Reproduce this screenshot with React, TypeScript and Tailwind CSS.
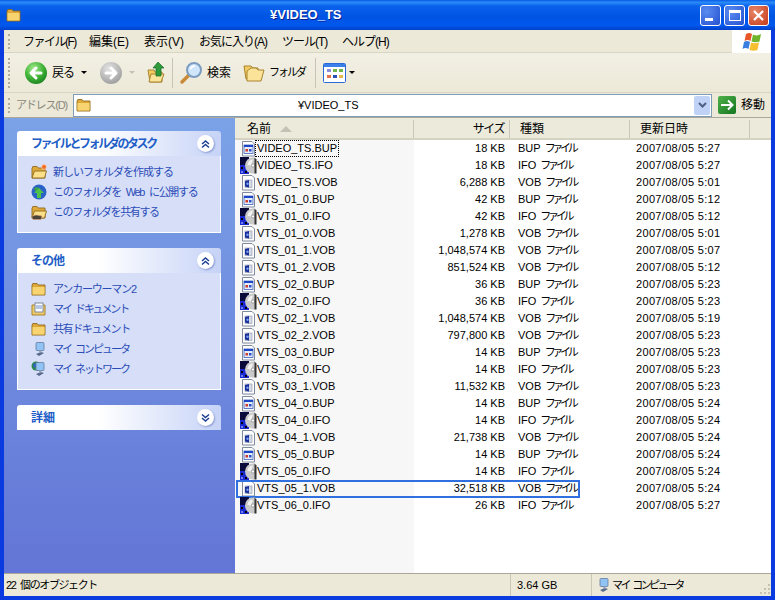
const font = "[font-family:'Liberation_Sans','Noto_Sans_CJK_JP',sans-serif]"

const files = [
  ['VIDEO_TS.BUP', '18 KB', 'BUP', '2007/08/05 5:27'],
  ['VIDEO_TS.IFO', '18 KB', 'IFO', '2007/08/05 5:27'],
  ['VIDEO_TS.VOB', '6,288 KB', 'VOB', '2007/08/05 5:01'],
  ['VTS_01_0.BUP', '42 KB', 'BUP', '2007/08/05 5:12'],
  ['VTS_01_0.IFO', '42 KB', 'IFO', '2007/08/05 5:12'],
  ['VTS_01_0.VOB', '1,278 KB', 'VOB', '2007/08/05 5:01'],
  ['VTS_01_1.VOB', '1,048,574 KB', 'VOB', '2007/08/05 5:07'],
  ['VTS_01_2.VOB', '851,524 KB', 'VOB', '2007/08/05 5:12'],
  ['VTS_02_0.BUP', '36 KB', 'BUP', '2007/08/05 5:23'],
  ['VTS_02_0.IFO', '36 KB', 'IFO', '2007/08/05 5:23'],
  ['VTS_02_1.VOB', '1,048,574 KB', 'VOB', '2007/08/05 5:19'],
  ['VTS_02_2.VOB', '797,800 KB', 'VOB', '2007/08/05 5:23'],
  ['VTS_03_0.BUP', '14 KB', 'BUP', '2007/08/05 5:23'],
  ['VTS_03_0.IFO', '14 KB', 'IFO', '2007/08/05 5:23'],
  ['VTS_03_1.VOB', '11,532 KB', 'VOB', '2007/08/05 5:23'],
  ['VTS_04_0.BUP', '14 KB', 'BUP', '2007/08/05 5:24'],
  ['VTS_04_0.IFO', '14 KB', 'IFO', '2007/08/05 5:24'],
  ['VTS_04_1.VOB', '21,738 KB', 'VOB', '2007/08/05 5:24'],
  ['VTS_05_0.BUP', '14 KB', 'BUP', '2007/08/05 5:24'],
  ['VTS_05_0.IFO', '14 KB', 'IFO', '2007/08/05 5:24'],
  ['VTS_05_1.VOB', '32,518 KB', 'VOB', '2007/08/05 5:24'],
  ['VTS_06_0.IFO', '26 KB', 'IFO', '2007/08/05 5:27'],
]

function Folder({ size = 16, open = false, mark }: { size?: number; open?: boolean; mark?: 'new' | 'share' }) {
  return (
    <svg width={size} height={size} viewBox="0 0 16 16" className="shrink-0">
      <path d="M1 4.5 L1.8 2.5 H6 L7.2 4 H14 V14 H1 Z" fill="#dfa93a" stroke="#8f6a1e" strokeWidth="0.9" />
      {open ? (
        <path d="M3.5 7 H15.5 L13.5 14 H1 Z" fill="#fbe08a" stroke="#8f6a1e" strokeWidth="0.9" />
      ) : (
        <rect x="1.5" y="6" width="12" height="7.5" fill="#f8d470" />
      )}
      {mark === 'new' && <circle cx="13" cy="3" r="2.4" fill="#ef6a2a" stroke="#ffd9a0" strokeWidth="0.7" />}
      {mark === 'share' && <path d="M0.5 12.5 L5 11 L11 12 L10 15.5 H2 Z" fill="#4a4238" stroke="#d8a070" strokeWidth="0.6" />}
    </svg>
  )
}

function FileIcon({ name }: { name: string }) {
  if (name.endsWith('.IFO')) {
    return (
      <svg width="17" height="17" viewBox="0 0 17 17" className="shrink-0">
        <rect x="0" y="0" width="9" height="8" fill="#0a0a3a" />
        <rect x="0" y="8" width="9" height="9" fill="#1a2ad0" />
        <rect x="1" y="10" width="2" height="2" fill="#000" />
        <rect x="5" y="14" width="2" height="2" fill="#000" />
        <rect x="1" y="14" width="2" height="2" fill="#7080f0" />
        <path d="M13 0.5 A8 8 0 0 0 13 16.5 L15 16.5 L15 0.5 Z" fill="#c9c9c9" />
        <path d="M13 2.5 A6 6 0 0 0 7.5 8 L11 8.5 Z" fill="#f2f2f2" />
        <circle cx="13" cy="8.5" r="1.6" fill="#fff" stroke="#777" strokeWidth="0.6" />
        <path d="M14.5 0.5 L16.5 2.5 V16.5 H14.5 Z" fill="#333" />
      </svg>
    )
  }
  return (
    <svg width="17" height="17" viewBox="0 0 17 17" className="shrink-0">
      <path d="M2.5 1.5 H12 L14.5 4 V16 H2.5 Z" fill="#fff" stroke="#7f8a9c" strokeWidth="1" />
      {name.endsWith('.BUP') ? (
        <>
          <rect x="4" y="5" width="9" height="8.5" fill="#e6ecf8" stroke="#3a5fb8" strokeWidth="0.8" />
          <rect x="4" y="5" width="9" height="2" fill="#1c46c8" />
          <rect x="5.5" y="9" width="2.5" height="2.5" fill="#d03a2a" />
          <rect x="9" y="9" width="2.5" height="2.5" fill="#2a50c8" />
        </>
      ) : (
        <>
          <rect x="5" y="6" width="7" height="7.5" fill="#d7dbe6" stroke="#8b93a8" strokeWidth="0.6" />
          <path d="M5 7 L9 6 V13.5 L5 12.5 Z" fill="#18309a" />
          <circle cx="7.5" cy="9.8" r="1.2" fill="#7fa0ef" />
        </>
      )}
    </svg>
  )
}

function NavArrow({ disabled, dir }: { disabled?: boolean; dir: 'left' | 'right' }) {
  const d = dir === 'left' ? 'M17 12 H8 M12 7 L7 12 L12 17' : 'M7 12 H16 M12 7 L17 12 L12 17'
  return (
    <svg width="24" height="24" viewBox="0 0 24 24" className="shrink-0">
      <defs>
        <radialGradient id="navGreen" cx="40%" cy="30%" r="75%">
          <stop offset="0%" stopColor="#a5ec90" />
          <stop offset="55%" stopColor="#44b53a" />
          <stop offset="100%" stopColor="#16801d" />
        </radialGradient>
        <radialGradient id="navGray" cx="40%" cy="30%" r="75%">
          <stop offset="0%" stopColor="#e4e4e4" />
          <stop offset="100%" stopColor="#9c9c9c" />
        </radialGradient>
      </defs>
      <circle cx="12" cy="12" r="11" fill={disabled ? 'url(#navGray)' : 'url(#navGreen)'} />
      <path d={d} fill="none" stroke="#fff" strokeWidth="3" strokeLinecap="round" strokeLinejoin="round" />
    </svg>
  )
}

function Caret({ muted }: { muted?: boolean }) {
  return <span className={`inline-block w-0 h-0 border-x-[3px] border-x-transparent border-t-[3px] ${muted ? 'border-t-[#c4c2b4]' : 'border-t-black'}`} />
}

function Chevron({ up }: { up?: boolean }) {
  const a = up ? 'M4 8 L7.5 5 L11 8 M4 11.5 L7.5 8.5 L11 11.5' : 'M4 4.5 L7.5 7.5 L11 4.5 M4 8 L7.5 11 L11 8'
  return (
    <span className="w-[17px] h-[17px] rounded-full bg-white shadow-[1px_1px_2px_#8a9ad0] flex items-center justify-center">
      <svg width="15" height="15" viewBox="0 0 15 15">
        <path d={a} fill="none" stroke="#1c3f94" strokeWidth="1.5" />
      </svg>
    </span>
  )
}

function Computer({ net }: { net?: boolean }) {
  return (
    <svg width="16" height="16" viewBox="0 0 16 16" className="shrink-0">
      {net && <circle cx="5" cy="5" r="4.5" fill="#2b8a4a" />}
      {net && <path d="M2 3 L6 1.5 L6 5 L3 7 Z" fill="#3060c8" />}
      <rect x="5" y="1.5" width="8" height="8" rx="1" fill="#8fc4f4" stroke="#64789c" strokeWidth="0.8" />
      <path d="M5 13 L10 11 L13 12 L8 15 Z" fill="#58698c" />
      <rect x="8" y="9.5" width="2.5" height="2" fill="#99a4bc" />
    </svg>
  )
}

function SideLink({ icon, label, fit }: { icon: React.ReactNode; label: string; fit: string }) {
  return (
    <div className="h-5 flex items-center gap-[6px] pl-[13px] text-[11px] text-[#2b4bb8] whitespace-nowrap [word-spacing:3px]">
      <span className="w-4 h-4 flex items-center justify-center">{icon}</span>
      <span className={fit}>{label}</span>
    </div>
  )
}

function Panel({ title, up, fit, children }: { title: string; up: boolean; fit?: string; children?: React.ReactNode }) {
  return (
    <div className="w-[204px]">
      <div className="h-[25px] rounded-t-[3px] bg-[linear-gradient(90deg,#ffffff_40%,#c6d3f7)] flex items-center justify-between pl-[14px] pr-[7px]">
        <span className={`text-[12px] font-bold text-[#215dc6] whitespace-nowrap ${fit ?? ''}`}>{title}</span>
        <Chevron up={up} />
      </div>
      {children && <div className="bg-[#d6dff7] border border-t-0 border-white">{children}</div>}
    </div>
  )
}

export default function App() {
  return (
    <div className={`w-[775px] h-[600px] flex flex-col overflow-hidden bg-[#0a3be0] ${font}`}>
      {/* Title bar */}
      <div className="h-[30px] shrink-0 flex items-center pl-[6px] pr-[6px] bg-[linear-gradient(180deg,#0a5ce6_0%,#2a8cf8_8%,#0a62ec_20%,#0054e3_55%,#0058ee_85%,#0040c8_100%)]">
        <Folder size={16} />
        <span className="ml-[248px] text-[13px] font-bold text-white [text-shadow:1px_1px_#0a1f90]">¥VIDEO_TS</span>
        <div className="ml-auto flex gap-[3px]">
          <div className="w-[21px] h-[21px] rounded-[3px] border border-white bg-[radial-gradient(circle_at_30%_30%,#5a8cf0,#2450d0)] flex items-end pl-[4px] pb-[4px]">
            <span className="w-[8px] h-[3px] bg-white" />
          </div>
          <div className="w-[21px] h-[21px] rounded-[3px] border border-white bg-[radial-gradient(circle_at_30%_30%,#5a8cf0,#2450d0)] flex items-center justify-center">
            <span className="w-[12px] h-[11px] border border-white border-t-[3px]" />
          </div>
          <div className="w-[21px] h-[21px] rounded-[3px] border border-white bg-[radial-gradient(circle_at_30%_30%,#e8866a,#c63a18)] flex items-center justify-center">
            <svg width="13" height="13" viewBox="0 0 13 13">
              <path d="M2 2 L11 11 M11 2 L2 11" stroke="#fff" strokeWidth="2.2" />
            </svg>
          </div>
        </div>
      </div>

      <div className="flex-1 min-h-0 mx-[4px] mb-[4px] flex flex-col bg-[#ece9d8]">
        {/* Menu bar */}
        <div className="h-[23px] shrink-0 flex items-center border-b border-[#d8d5c5] text-[12px] text-black whitespace-nowrap pt-[1px]">
          <span className="ml-[4px] w-[3px] h-[15px] border-l-2 border-dotted border-[#b0ad9c]" />
          <span className="ml-[12px] w-[66px] tracking-[-1.5px]">ファイル(F)</span>
          <span className="w-[55px]">編集(E)</span>
          <span className="w-[55px]">表示(V)</span>
          <span className="w-[83px] tracking-[-1px]">お気に入り(A)</span>
          <span className="w-[60px] tracking-[-1px]">ツール(T)</span>
          <span className="tracking-[-1px]">ヘルプ(H)</span>
          <div className="ml-auto w-[39px] h-[23px] bg-white flex items-center justify-center">
            <svg width="22" height="20" viewBox="0 0 22 20">
              <path d="M5 2 Q8 0 11 2 L9.5 9 Q6.5 7 3.5 9 Z" fill="#e8562a" />
              <path d="M12 2.5 Q16 4.5 20 2 L18.5 9.5 Q14.5 11 10.5 9.5 Z" fill="#6fb52c" />
              <path d="M3 10 Q6 8 9 10 L7.5 17 Q4.5 15 1.5 17 Z" fill="#3a7fe0" />
              <path d="M10 10.5 Q14 12 18 10.5 L16.5 18 Q12.5 19.5 8.5 18 Z" fill="#f5c030" />
            </svg>
          </div>
        </div>

        {/* Toolbar */}
        <div className="h-[40px] shrink-0 flex items-center border-b border-[#d8d5c5] text-[12px] text-black whitespace-nowrap bg-[linear-gradient(180deg,#f2f0e4,#ece9d8)]">
          <span className="ml-[4px] w-[3px] h-[30px] border-l-2 border-dotted border-[#b0ad9c]" />
          <div className="ml-[13px]"><NavArrow dir="left" /></div>
          <span className="ml-[4px] w-[22px] tracking-[-1px]">戻る</span>
          <span className="ml-[7px] flex"><Caret /></span>
          <div className="ml-[12px]"><NavArrow dir="right" disabled /></div>
          <span className="ml-[6px] flex"><Caret muted /></span>
          <svg width="22" height="24" viewBox="0 0 22 24" className="ml-[11px] shrink-0">
            <path d="M2 9 H8 L9 11 H16 V21 H4 Z" fill="#f2cb62" stroke="#a8842e" />
            <path d="M5 13 H18 L15 21 H3 Z" fill="#fbe39a" stroke="#a8842e" />
            <path d="M12 1 L18 7 H15 V15 H10 V7 H7 Z" fill="#2e9a3c" stroke="#176d25" strokeWidth="0.7" />
          </svg>
          <span className="ml-[4px] w-[1px] h-[30px] bg-[#c8c5b3]" />
          <svg width="24" height="24" viewBox="0 0 24 24" className="ml-[6px] shrink-0">
            <path d="M3 21 L10 14" stroke="#c98a3a" strokeWidth="3.5" strokeLinecap="round" />
            <circle cx="15" cy="9" r="7" fill="#cfe6fb" stroke="#7d9cc0" strokeWidth="2" />
            <path d="M11 8 Q13 5 16 5" stroke="#fff" strokeWidth="1.5" fill="none" />
          </svg>
          <span className="ml-[4px] w-[24px]">検索</span>
          <svg width="23" height="22" viewBox="0 0 23 22" className="ml-[12px] shrink-0">
            <path d="M1 4 H8 L10 6 H15 V17 H3 Z" fill="#f2cb62" stroke="#a8842e" />
            <path d="M4 9 L8 6 H13 L15 8 H21 L18 19 H4 Z" fill="#fbe39a" stroke="#a8842e" />
          </svg>
          <span className="ml-[3px] w-[36px] text-[11px] tracking-[-2px]">フォルダ</span>
          <span className="ml-[10px] w-[1px] h-[30px] bg-[#c8c5b3]" />
          <svg width="23" height="20" viewBox="0 0 23 20" className="ml-[7px] shrink-0">
            <rect x="0.5" y="0.5" width="22" height="19" rx="1" fill="#fff" stroke="#2a6ad8" />
            <rect x="1" y="1" width="21" height="3" fill="#3a80e8" />
            <rect x="4" y="6" width="4" height="3" fill="#8c8cd8" />
            <rect x="10" y="6" width="4" height="3" fill="#6fb54a" />
            <rect x="16" y="6" width="4" height="3" fill="#6fb54a" />
            <rect x="4" y="12" width="4" height="3" fill="#e8704a" />
            <rect x="10" y="12" width="4" height="3" fill="#2a50b8" />
            <rect x="16" y="12" width="4" height="3" fill="#e8b84a" />
          </svg>
          <span className="ml-[3px] flex"><Caret /></span>
        </div>

        {/* Address bar */}
        <div className="h-[25px] shrink-0 flex items-center text-[12px] border-b border-[#aca899] whitespace-nowrap">
          <span className="ml-[4px] w-[3px] h-[15px] border-l-2 border-dotted border-[#b0ad9c]" />
          <span className="ml-[5px] w-[57px] text-[#8a887c] text-[11px] tracking-[-1.2px]">アドレス(D)</span>
          <div className="w-[639px] h-[23px] bg-white border border-[#7f9db9] flex items-center pl-[2px] pr-[1px] text-black">
            <Folder size={16} />
            <span className="ml-[206px] text-[11px]">¥VIDEO_TS</span>
            <div className="ml-auto w-[16px] h-[19px] rounded-[2px] bg-[#c1d2f7] flex items-center justify-center">
              <svg width="9" height="7" viewBox="0 0 9 7">
                <path d="M1 1 L4.5 4.5 L8 1" fill="none" stroke="#4d6185" strokeWidth="2" />
              </svg>
            </div>
          </div>
          <div className="ml-[6px] w-[18px] h-[18px] rounded-[2px] bg-[linear-gradient(135deg,#4fb04a,#14761f)] flex items-center justify-center">
            <svg width="14" height="12" viewBox="0 0 14 12">
              <path d="M1 6 H12 M8 1.5 L12.5 6 L8 10.5" fill="none" stroke="#fff" strokeWidth="2" />
            </svg>
          </div>
          <span className="ml-[5px] text-black">移動</span>
        </div>

        {/* Main */}
        <div className="flex-1 min-h-0 flex">
          <aside className="w-[231px] shrink-0 bg-[linear-gradient(180deg,#7ba2e7,#6375d6)] pl-[13px] pt-[13px] flex flex-col gap-[15px]">
            <Panel title="ファイルとフォルダのタスク" up fit="tracking-[-2.4px]">
              <div className="pt-[6px] pb-[10px]">
                <SideLink icon={<Folder open mark="new" />} label="新しいフォルダを作成する" fit="tracking-[-1px]" />
                <SideLink
                  icon={
                    <svg width="16" height="16" viewBox="0 0 16 16">
                      <circle cx="8" cy="8" r="7.5" fill="#2a62c8" />
                      <path d="M3 4 Q7 2 9 5 L5 9 Z" fill="#3aa04a" />
                      <path d="M8 4 L13 9 H10 V14 H6 V9 H3 Z" fill="#4fc24a" />
                    </svg>
                  }
                  label="このフォルダを Web に公開する"
                  fit="tracking-[-1.3px]"
                />
                <SideLink icon={<Folder open mark="share" />} label="このフォルダを共有する" fit="tracking-[-1.4px]" />
              </div>
            </Panel>
            <Panel title="その他" up fit="tracking-[-1px]">
              <div className="pt-[6px] pb-[10px]">
                <SideLink icon={<Folder />} label="アンカーウーマン2" fit="tracking-[-1.2px]" />
                <SideLink
                  icon={
                    <svg width="16" height="16" viewBox="0 0 16 16">
                      <path d="M1 4 H14 V14 H1 Z" fill="#f0cc6a" stroke="#a8842e" />
                      <rect x="4" y="2" width="8" height="9" fill="#fff" stroke="#7d8aa0" />
                      <path d="M5 5 H11 M5 7 H11" stroke="#6f8fc8" />
                    </svg>
                  }
                  label="マイ ドキュメント"
                  fit="tracking-[-2.1px]"
                />
                <SideLink icon={<Folder />} label="共有ドキュメント" fit="tracking-[-1.4px]" />
                <SideLink icon={<Computer />} label="マイ コンピュータ" fit="tracking-[-2px]" />
                <SideLink icon={<Computer net />} label="マイ ネットワーク" fit="tracking-[-2px]" />
              </div>
            </Panel>
            <Panel title="詳細" up={false} />
          </aside>

          <div className="flex-1 min-w-0 flex flex-col bg-white text-[12px] text-black">
            {/* Column headers */}
            <div className="h-[22px] shrink-0 flex items-center bg-[#ebeadb] border-b-2 border-[#d6d2c2] pt-[2px]">
              <div className="w-[179px] h-[18px] flex items-center pl-[12px] border-r border-[#cbc7b8]">
                名前
                <span className="ml-[9px] w-0 h-0 border-x-[6px] border-x-transparent border-b-[6px] border-b-[#c4c2b4]" />
              </div>
              <div className="w-[96px] h-[18px] flex items-center justify-end pr-[5px] border-r border-[#cbc7b8] tracking-[-1.5px]">サイズ</div>
              <div className="w-[120px] h-[18px] flex items-center pl-[10px] border-r border-[#cbc7b8]">種類</div>
              <div className="w-[120px] h-[18px] flex items-center pl-[10px] border-r border-[#cbc7b8]">更新日時</div>
            </div>

            {/* File rows */}
            <div className="flex-1 min-h-0 bg-[linear-gradient(90deg,#f7f7f7_179px,#ffffff_179px)] text-[11px]">
              {files.map(([name, size, type, date], i) => (
                <div key={name} className="relative h-[17px] flex items-center whitespace-nowrap">
                  <div className="w-[179px] flex items-center pl-[5px]">
                    <FileIcon name={name} />
                    <span className={i === 0 ? 'ml-[-2px] px-[1px] h-[17px] leading-[15px] border border-dotted border-black' : ''}>{name}</span>
                  </div>
                  <div className="w-[91px] text-right">{size}</div>
                  <div className="w-[125px] pl-[13px]">
                    {type}
                    <span className="ml-[4px] tracking-[-3.3px]">ファイル</span>
                  </div>
                  <div className="pl-[6px] tracking-[0.33px]">{date}</div>
                  {name === 'VTS_05_1.VOB' && (
                    <div className="absolute left-[1px] top-0 w-[344px] h-[18px] border-2 border-[#2f6fe0]" />
                  )}
                </div>
              ))}
            </div>
          </div>
        </div>

        {/* Status bar */}
        <div className="h-[23px] shrink-0 flex items-center text-[11px] text-black border-t border-[#aca899] bg-[#ece9d8] whitespace-nowrap">
          <div className="w-[506px] pl-[2px] tracking-[-1.4px] [word-spacing:3px]">22 個のオブジェクト</div>
          <div className="w-[81px] h-full pl-[6px] flex items-center border-l border-[#cbc7b8]">3.64 GB</div>
          <div className="flex-1 h-full pl-[3px] flex items-center gap-[1px] border-l border-[#cbc7b8]">
            <Computer />
            <span className="tracking-[-2.6px] [word-spacing:3px]">マイ コンピュータ</span>
            <svg width="12" height="12" viewBox="0 0 12 12" className="ml-auto self-end mb-[1px]">
              <path d="M9 1h2v2H9zM5 5h2v2H5zM9 5h2v2H9zM1 9h2v2H1zM5 9h2v2H5zM9 9h2v2H9z" fill="#c4c1b0" />
            </svg>
          </div>
        </div>
      </div>
    </div>
  )
}
